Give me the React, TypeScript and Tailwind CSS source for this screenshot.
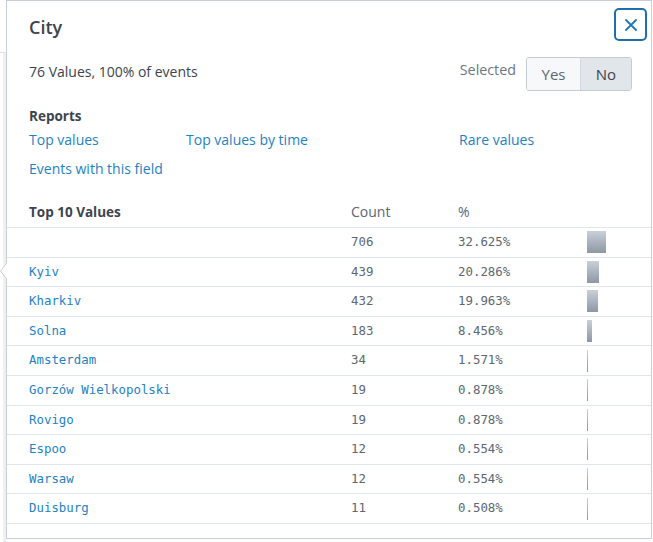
import React from "react";

const rows: { name: string; count: number; pct: string }[] = [
  { name: "", count: 706, pct: "32.625%" },
  { name: "Kyiv", count: 439, pct: "20.286%" },
  { name: "Kharkiv", count: 432, pct: "19.963%" },
  { name: "Solna", count: 183, pct: "8.456%" },
  { name: "Amsterdam", count: 34, pct: "1.571%" },
  { name: "Gorzów Wielkopolski", count: 19, pct: "0.878%" },
  { name: "Rovigo", count: 19, pct: "0.878%" },
  { name: "Espoo", count: 12, pct: "0.554%" },
  { name: "Warsaw", count: 12, pct: "0.554%" },
  { name: "Duisburg", count: 11, pct: "0.508%" },
];

const sans = { fontFamily: '"Open Sans", "Liberation Sans", sans-serif' };
const mono = { fontFamily: '"DejaVu Sans Mono", "Liberation Mono", monospace' };

export default function App() {
  return (
    <div className="w-[653px] h-[542px] bg-white flex overflow-hidden" style={sans}>
      <div className="w-[6px] flex flex-col">
        <div className="h-[53px] bg-white border-b border-[#dfe3e7]" />
        <div className="flex-1 flex">
          <div className="w-[3px] bg-white" />
          <div className="flex-1 bg-[#eef0f2]" />
        </div>
      </div>
      <div className="relative w-[646px] h-[539px] border border-[#c9cfd6] bg-white">
        {/* pointer */}
        <svg className="absolute left-[-7px] top-[261px]" width="8" height="18" viewBox="0 0 8 18">
          <path d="M7.5 0 L0.5 9 L7.5 18" fill="white" stroke="#c9cfd6" strokeWidth="1" />
          <rect x="7" y="0" width="1" height="18" fill="white" />
        </svg>

        {/* header */}
        <div className="flex justify-between items-start pl-[22px] pr-[4px] pt-[7px]">
          <div className="pt-[7px] text-[18px] leading-[24px] font-semibold text-[#3c444d]">City</div>
          <button className="w-[33px] h-[33px] rounded-[5px] border-2 border-[#1f6fae] flex items-center justify-center">
            <svg width="12" height="12" viewBox="0 0 12 12">
              <path d="M1 1 L11 11 M11 1 L1 11" stroke="#1f75b8" strokeWidth="1.8" strokeLinecap="round" />
            </svg>
          </button>
        </div>

        {/* values row */}
        <div className="mt-[16px] h-[34px] flex justify-between items-start pl-[22px] pr-[19px]">
          <div className="mt-[5px] text-[14px] leading-[20px] text-[#3c444d]">76 Values, 100% of events</div>
          <div className="flex items-start">
            <div className="mt-[3px] mr-[10px] text-[14.3px] leading-[20px] text-[#6b7785]">Selected</div>
            <div className="flex h-[34px] rounded-[3px] border border-[#c3cbd4] overflow-hidden text-[15px]">
              <div className="w-[54px] bg-[#f7f8fa] text-[#5c6773] flex items-center justify-center border-r border-[#d3d9df]">Yes</div>
              <div className="w-[50px] bg-[#e1e6eb] text-[#3c444d] flex items-center justify-center">No</div>
            </div>
          </div>
        </div>

        {/* reports */}
        <div className="pl-[22px] mt-[15px]">
          <div className="text-[13.5px] leading-[20px] font-bold text-[#3c444d]">Reports</div>
          <div className="mt-[4px] grid grid-cols-[157px_273px_1fr] gap-y-[9px] text-[14px] leading-[20px] text-[#1e82c4]">
            <div>Top values</div>
            <div>Top values by time</div>
            <div>Rare values</div>
            <div className="col-span-3">Events with this field</div>
          </div>
        </div>

        {/* table */}
        <div className="mt-[23px]">
          <div className="flex pl-[22px] pb-[5px] border-b border-[#e1e6eb] leading-[20px]">
            <div className="w-[322px] text-[13.5px] font-bold text-[#3c444d]">Top 10 Values</div>
            <div className="w-[107px] text-[14px] text-[#5c6773]">Count</div>
            <div className="w-[129px] text-[14px] text-[#5c6773]">%</div>
          </div>
          {rows.map((r, i) => (
            <div
              key={i}
              className="flex items-center pl-[22px] h-[29.6px] border-b border-[#e1e6eb] text-[12.4px]"
              style={mono}
            >
              <div className="w-[322px] text-[#1e82c4] whitespace-nowrap">{r.name}</div>
              <div className="w-[107px] text-[#5c6773]">{r.count}</div>
              <div className="w-[129px] text-[#5c6773]">{r.pct}</div>
              <div className="h-[22px] flex items-stretch">
                <div
                  className="bg-gradient-to-b from-[#c9d0d8] to-[#8d98a4]"
                  style={{ width: `${Math.max(1, (r.count / 706) * 18.5)}px` }}
                />
              </div>
            </div>
          ))}
        </div>
      </div>
    </div>
  );
}
